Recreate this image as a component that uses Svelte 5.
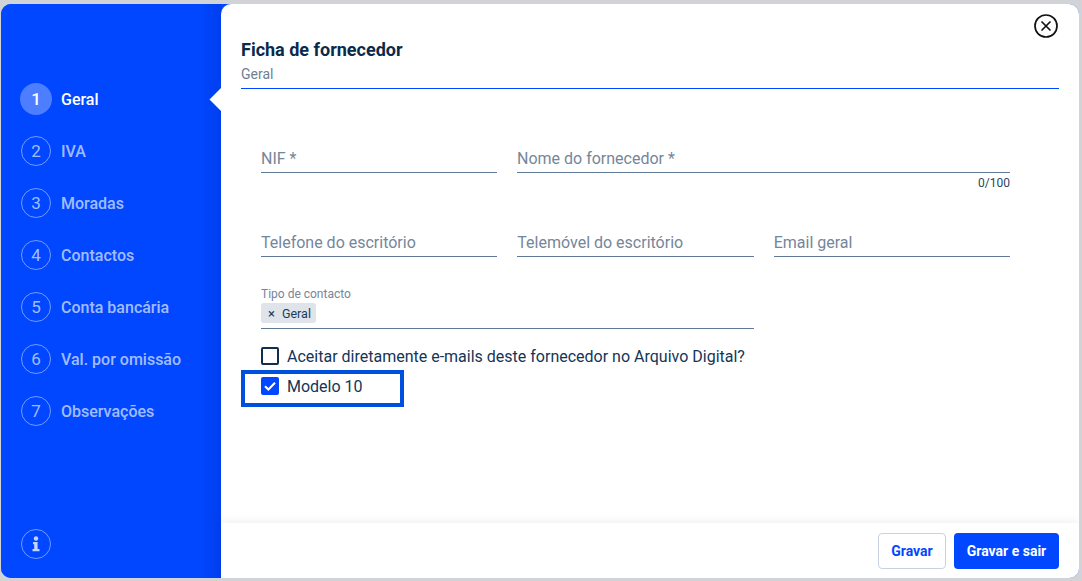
<script>
  const steps = ['Geral', 'IVA', 'Moradas', 'Contactos', 'Conta bancária', 'Val. por omissão', 'Observações'];
</script>

<div class="page">
  <div class="modal">
    <aside class="side">
      <nav class="steps">
        {#each steps as s, i}
          <div class="step" class:active={i === 0}>
            <span class="num">{i + 1}</span>
            <span class="lbl">{s}</span>
          </div>
        {/each}
      </nav>
      <div class="info">
        <svg width="30" height="30" viewBox="0 0 30 30">
          <circle cx="15" cy="15" r="14.5" fill="none" stroke="#fff" stroke-opacity=".45" />
          <circle cx="15" cy="9.5" r="2.2" fill="#c4d4ff" />
          <path d="M12 13h4.6v7H18.500v2.300h-7V20h1.700v-4.700H12z" fill="#c4d4ff" />
        </svg>
      </div>
    </aside>
    <main class="main">
      <span class="notch"></span>
      <button class="close" aria-label="Fechar">
        <svg width="24" height="24" viewBox="0 0 24 24">
          <circle cx="12" cy="12" r="11" fill="none" stroke="#111" stroke-width="1.700" />
          <path d="M8 8l8 8M16 8l-8 8" stroke="#111" stroke-width="1.700" stroke-linecap="round" />
        </svg>
      </button>
      <div class="content">
        <header class="head">
          <h1>Ficha de fornecedor</h1>
          <p>Geral</p>
        </header>
        <div class="form">
          <div class="row r1">
            <div class="field"><span class="ph">NIF *</span></div>
            <div class="wide">
              <div class="field"><span class="ph">Nome do fornecedor *</span></div>
              <div class="count">0/100</div>
            </div>
          </div>
          <div class="row r2">
            <div class="field"><span class="ph">Telefone do escritório</span></div>
            <div class="field"><span class="ph">Telemóvel do escritório</span></div>
            <div class="field"><span class="ph">Email geral</span></div>
          </div>
          <div class="tipo">
            <span class="mini">Tipo de contacto</span>
            <span class="chip"><span class="x">×</span>Geral</span>
          </div>
          <label class="check first"><span class="box"></span>Aceitar diretamente e-mails deste fornecedor no Arquivo Digital?</label>
          <label class="check second">
            <span class="box on">
              <svg width="18" height="18" viewBox="0 0 18 18"><path d="M4 9.200l3.400 3.300L14 5.800" fill="none" stroke="#fff" stroke-width="2" /></svg>
            </span>Modelo 10
          </label>
          <span class="mark"></span>
        </div>
      </div>
      <footer class="foot">
        <button class="btn ghost">Gravar</button>
        <button class="btn solid">Gravar e sair</button>
      </footer>
    </main>
  </div>
</div>

<style>
  :global(body) { margin: 0; background: #d2d3d6; font-family: Roboto, "Liberation Sans", sans-serif; }
  .page { width: 1082px; height: 581px; padding: 4px 3px 3px 1px; box-sizing: border-box; overflow: hidden; }
  .modal { display: flex; height: 574px; border-radius: 10px; background: #0047ff; overflow: hidden; }
  .side { width: 220px; flex: none; display: flex; flex-direction: column; justify-content: space-between; padding: 79px 0 19px 19px; box-sizing: border-box;
    background: linear-gradient(90deg, #0047ff 90%, #003fee 100%); }
  .steps { display: flex; flex-direction: column; gap: 20px; }
  .step { display: flex; align-items: center; gap: 9px; height: 32px; color: rgba(255,255,255,.65); font-size: 16px; font-weight: 500; }
  .num { width: 30px; height: 30px; margin: 0 1px; border: 1px solid rgba(255,255,255,.45); border-radius: 50%; box-sizing: border-box; display: flex; align-items: center; justify-content: center; font-size: 17px; font-weight: 400; }
  .step.active { color: #fff; }
  .step.active .num { width: 32px; height: 32px; margin: 0; border: 0; background: #4d7eff; font-weight: 500; }
  .info { height: 30px; margin-left: 1px; }
  .info svg { display: block; }
  .main { flex: 1; position: relative; background: #fff; border-radius: 10px 0 0 10px; display: flex; flex-direction: column; min-width: 0; }
  .notch { position: absolute; left: -12px; top: 83px; width: 24px; height: 24px; }
  .notch::before { content: ""; position: absolute; left: 3.5px; top: 3.5px; width: 17px; height: 17px; background: #fff; transform: rotate(45deg); }
  .close { position: absolute; right: 21px; top: 10px; width: 24px; height: 24px; padding: 0; border: 0; background: none; }
  .close svg { display: block; }
  .content { flex: 1; padding: 36px 20px 0; min-height: 0; }
  .head { border-bottom: 1px solid #0047ff; height: 49px; box-sizing: border-box; }
  h1 { margin: 0; font-size: 18px; line-height: 20px; font-weight: 700; color: #0b2a4a; }
  p { margin: 5px 0 0; font-size: 14px; line-height: 18px; color: #6f7f93; }
  .form { position: relative; padding: 58px 20px 0; width: 749px; }
  .row { display: grid; grid-template-columns: repeat(3, 236.33px); column-gap: 20px; }
  .r1 { grid-template-columns: 236px 493px; }
  .r2 { margin-top: 41px; }
  .field { height: 25px; border-bottom: 1px solid #607a96; display: flex; align-items: center; }
  .ph { font-size: 16px; color: #75869a; line-height: 20px; margin-bottom: 1px; }
  .count { text-align: right; font-size: 12px; line-height: 14px; color: #2b4560; margin-top: 3px; }
  .tipo { width: 493px; height: 41px; margin-top: 30px; border-bottom: 1px solid #607a96; }
  .mini { display: block; font-size: 12px; line-height: 14px; color: #75869a; }
  .chip { display: inline-flex; align-items: center; height: 20px; margin-top: 2px; padding: 0 5px 0 7px; background: #dfe3ea; border-radius: 3px; font-size: 12.500px; color: #1d3a58; }
  .x { margin-right: 7px; font-size: 13px; }
  .check { display: flex; align-items: center; gap: 8px; height: 28px; font-size: 16px; color: #143556; }
  .first { margin-top: 13px; }
  .second { margin-top: 2px; }
  .box { width: 18px; height: 18px; flex: none; box-sizing: border-box; border: 2px solid #0f2f50; border-radius: 2px; display: flex; }
  .box.on { background: #0047ff; border: 0; }
  .box svg { display: block; }
  .mark { position: absolute; left: 0; top: 281px; width: 163px; height: 37px; box-sizing: border-box; border: 4px solid #0050e0; pointer-events: none; }
  .foot { height: 55px; flex: none; box-sizing: border-box; padding: 10px 20px; display: flex; justify-content: flex-end; gap: 8px; box-shadow: 0 -3px 8px rgba(0,0,0,.05); background: #fff; border-radius: 0 0 10px 0; }
  .btn { height: 36px; border-radius: 4px; font: 700 14px Roboto, sans-serif; padding: 0; }
  .ghost { width: 68px; background: #fff; color: #0047ff; border: 1px solid #c9d3df; }
  .solid { width: 105px; background: #0047ff; color: #fff; border: 0; }
</style>
